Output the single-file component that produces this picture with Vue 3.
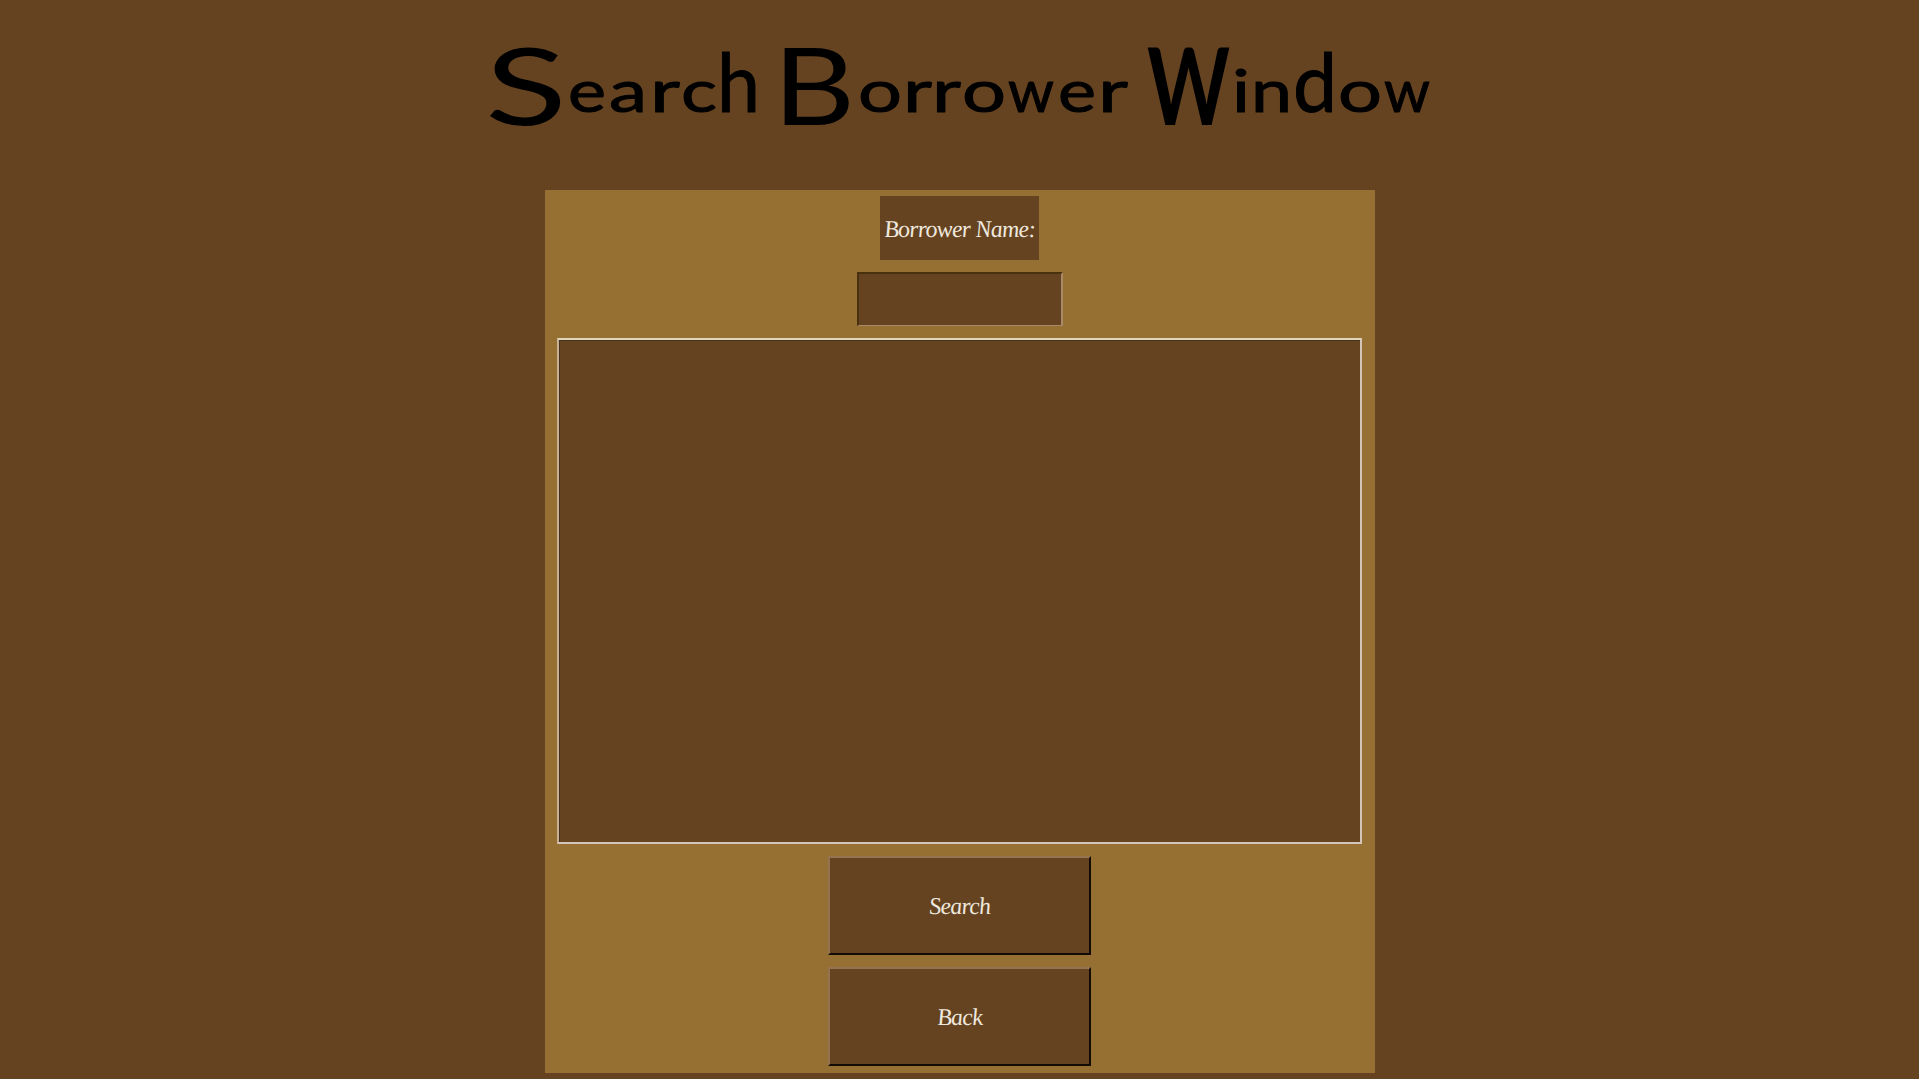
<script setup>
const small = 59
const large = 107
const title = [
  { ch: 'S', x: 485, size: large, y: 125, w: 82 },
  { ch: 'e', x: 568, size: small, y: 112, w: 38 },
  { ch: 'a', x: 609, size: small, y: 112, w: 38 },
  { ch: 'r', x: 650, size: small, y: 112, w: 30 },
  { ch: 'c', x: 681, size: small, y: 112, w: 36 },
  { ch: 'h', x: 717, size: 82, y: 112, w: 43 },
  { ch: ' ', x: 760, size: small, y: 112, w: 12 },
  { ch: 'B', x: 773, size: large, y: 125, w: 82 },
  { ch: 'o', x: 858, size: small, y: 112, w: 44 },
  { ch: 'r', x: 903, size: small, y: 112, w: 29 },
  { ch: 'r', x: 932, size: small, y: 112, w: 29 },
  { ch: 'o', x: 962, size: small, y: 112, w: 44 },
  { ch: 'w', x: 1008, size: small, y: 112, w: 46 },
  { ch: 'e', x: 1058, size: small, y: 112, w: 38 },
  { ch: 'r', x: 1098, size: small, y: 112, w: 30 },
  { ch: ' ', x: 1130, size: small, y: 112, w: 12 },
  { ch: 'W', x: 1147, size: large, y: 125, w: 83 },
  { ch: 'i', x: 1232, size: small, y: 112, w: 18 },
  { ch: 'n', x: 1251, size: small, y: 112, w: 41 },
  { ch: 'd', x: 1293, size: 82, y: 112, w: 44 },
  { ch: 'o', x: 1338, size: small, y: 112, w: 44 },
  { ch: 'w', x: 1384, size: small, y: 112, w: 46 },
]
</script>

<template>
  <main class="window">
    <svg class="title" viewBox="0 0 1919 190" role="heading" aria-label="Search Borrower Window">
      <text xml:space="preserve"><tspan
        v-for="(g, i) in title" :key="i"
        :x="g.x" :y="g.y" :font-size="g.size" :textLength="g.w"
        :class="{ cap: g.size === large, wide: g.ch === 'W' }"
        lengthAdjust="spacingAndGlyphs">{{ g.ch }}</tspan></text>
    </svg>
    <section class="panel">
      <label class="name" for="borrower"><span class="caption">Borrower Name:</span></label>
      <input id="borrower" class="entry" type="text" />
      <div class="results"></div>
      <button class="btn"><span class="caption">Search</span></button>
      <button class="btn"><span class="caption">Back</span></button>
    </section>
  </main>
</template>

<style>
body { margin: 0; background: #654321; }
</style>

<style scoped>
* { box-sizing: border-box; }
.window {
  height: 1079px;
  display: flex;
  flex-direction: column;
  align-items: center;
  background: #654321;
  overflow: hidden;
  font-family: "Liberation Serif", serif;
}
.title {
  display: block;
  width: 1919px;
  height: 190px;
  flex: none;
  font-family: Lato, sans-serif;
  font-weight: 400;
  fill: #000;
  stroke: #000;
  stroke-width: 1px;
}
.cap { stroke-width: 0; }
.wide { font-weight: 700; }
.panel {
  width: 830px;
  height: 883px;
  flex: none;
  padding: 6px 12px;
  display: flex;
  flex-direction: column;
  align-items: center;
  gap: 12px;
  background: #966f33;
}
.name, .btn {
  display: flex;
  align-items: center;
  justify-content: center;
  color: #eee8de;
  font: italic 24px/30px "Liberation Serif", serif;
  letter-spacing: -0.8px;
  white-space: nowrap;
}
.caption { display: block; padding-top: 1px; transform: skewX(5deg); }
.name { width: 159px; height: 64px; background: #654321; }
.entry {
  width: 206px;
  height: 54px;
  margin: 0;
  padding: 4px;
  background: #654321;
  border: solid;
  border-width: 2px 2px 1px 2px;
  border-color: #49300f #a88968 #a88968 #49300f;
  border-radius: 0;
  outline: none;
}
.results {
  width: 805px;
  height: 506px;
  background: #654321;
  border: solid;
  border-width: 2px;
  border-color: #e0d5bd #d3c5b8 #d3c5b8 #c6b397;
  box-shadow: inset 1px 1px 0 #493018;
}
.btn {
  width: 263px;
  height: 99px;
  margin: 0;
  padding: 0;
  background: #654321;
  border: solid;
  border-width: 2px;
  border-color: #957250 #130c05 #130c05 #957250;
  border-radius: 0;
}
</style>
